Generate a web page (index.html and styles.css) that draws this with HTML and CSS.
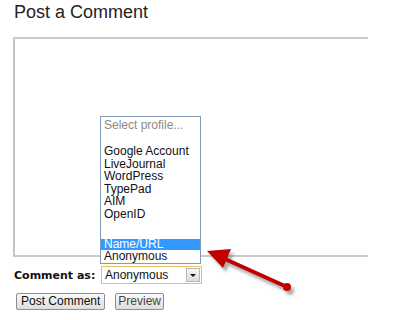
FILE: index.html
```html
<!DOCTYPE html>
<html lang="en">
<head>
    <meta charset="UTF-8">
    <title>Post a Comment</title>
    <link rel="stylesheet" href="styles.css">
</head>
<body>
    <div class="comment-form">
        <h2 class="title">Post a Comment</h2>

        <div class="comment-body"></div>

        <div class="identity-row">
            <span class="identity-label">Comment as:</span>
            <div class="profile-select">
                <span class="profile-value">Anonymous</span>
                <span class="select-button"><span class="select-caret"></span></span>
            </div>
        </div>

        <div class="actions">
            <button class="btn">Post Comment</button>
            <button class="btn btn-secondary">Preview</button>
        </div>

        <!-- open dropdown list -->
        <ul class="profile-list">
            <li class="hint">Select profile...</li>
            <li class="blank"></li>
            <li>Google Account</li>
            <li>LiveJournal</li>
            <li>WordPress</li>
            <li>TypePad</li>
            <li>AIM</li>
            <li>OpenID</li>
            <li class="blank blank-wide"></li>
            <li class="selected">Name/URL</li>
            <li class="last">Anonymous</li>
        </ul>

        <!-- annotation arrow -->
        <svg class="pointer" width="110" height="60" viewBox="0 0 110 60">
            <defs>
                <filter id="shadow" x="-20%" y="-20%" width="140%" height="160%">
                    <feGaussianBlur stdDeviation="1.5"/>
                </filter>
            </defs>
            <g transform="translate(3,4)" fill="#888" stroke="#888" filter="url(#shadow)" opacity="0.7">
                <line x1="24" y1="14" x2="86" y2="42" stroke-width="4"/>
                <polygon points="6,6 30,4 22,23" stroke="none"/>
                <circle cx="86" cy="42" r="4" stroke="none"/>
            </g>
            <g fill="#c00000" stroke="#c00000">
                <line x1="24" y1="14" x2="86" y2="42" stroke-width="4"/>
                <polygon points="6,6 30,4 22,23" stroke="none"/>
                <circle cx="86" cy="42" r="4" stroke="none"/>
            </g>
        </svg>
    </div>
</body>
</html>
```

FILE: styles.css
```css
body {
    margin: 0;
    background-color: #fff;
    font-family: "Liberation Sans", Arial, sans-serif;
    color: #222;
}
.comment-form {
    position: relative;
    padding: 0 0 0 13px;
}
.title {
    margin: 0;
    padding: 1px 0 0 1px;
    font-size: 18px;
    font-weight: normal;
    line-height: 22px;
}
.comment-body {
    margin-top: 14px;
    width: 353px;
    height: 216px;
    border: 2px solid #cacaca;
    border-right: none;
    border-left-color: #c4c4c4;
}
.identity-row {
    display: flex;
    align-items: center;
    margin-top: 9px;
    height: 18px;
}
.identity-label {
    width: 87px;
    padding-left: 1px;
    font-family: "DejaVu Sans", Verdana, sans-serif;
    font-size: 11px;
    font-weight: bold;
    color: #111;
}
.profile-select {
    display: flex;
    align-items: center;
    justify-content: space-between;
    box-sizing: border-box;
    width: 101px;
    height: 18px;
    border: 1px solid #e6c16a;
    background-color: #fff;
}
.profile-value {
    padding-left: 3px;
    font-size: 12px;
    color: #111;
}
.select-button {
    display: flex;
    align-items: center;
    justify-content: center;
    width: 14px;
    height: 14px;
    margin-right: 1px;
    border: 1px solid #b8b8b8;
    box-sizing: border-box;
    background: linear-gradient(#f6f6f6, #dcdcdc);
}
.select-caret {
    width: 0;
    height: 0;
    border-left: 3px solid transparent;
    border-right: 3px solid transparent;
    border-top: 3px solid #111;
}
.actions {
    display: flex;
    gap: 10px;
    margin-top: 9px;
    padding-left: 3px;
}
.btn {
    font-family: "Liberation Sans", Arial, sans-serif;
    font-size: 12px;
    color: #111;
    height: 17px;
    padding: 0 4px;
    line-height: 15px;
    border: 1px solid #8e8e8e;
    border-radius: 2px;
    background: linear-gradient(#fafafa, #dedede);
}
.btn-secondary {
    padding: 0 2px;
    color: #444;
}
.profile-list {
    position: absolute;
    left: 100px;
    top: 116px;
    width: 101px;
    box-sizing: border-box;
    margin: 0;
    padding: 1px 0 0;
    list-style: none;
    border: 1px solid #7f9db9;
    background-color: #fff;
    font-size: 12px;
    color: #111;
}
.profile-list li {
    height: 12.6px;
    line-height: 12.6px;
    padding-left: 3px;
}
.profile-list .hint {
    color: #8a8a8a;
    height: 14px;
    line-height: 14px;
}
.profile-list .blank {
    height: 13px;
}
.profile-list .blank-wide {
    height: 18px;
}
.profile-list .selected {
    height: 11.5px;
    line-height: 11.5px;
    background-color: #3399ff;
    color: #fff;
}
.profile-list .last {
    height: 13px;
    line-height: 13px;
}
.pointer {
    position: absolute;
    left: 201px;
    top: 245px;
}
```
